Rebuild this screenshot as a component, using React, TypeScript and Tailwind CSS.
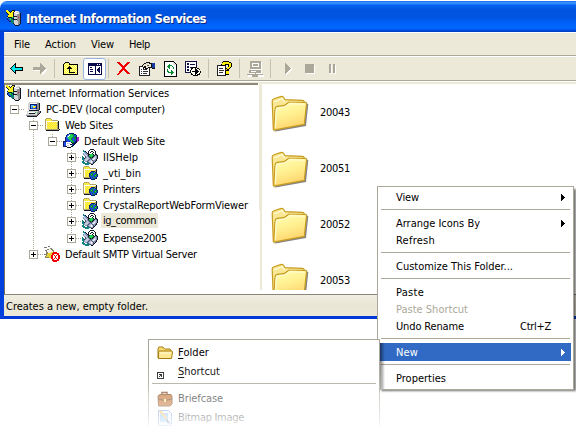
import React, { useLayoutEffect, useRef } from "react";

/** Label whose letter spacing is adjusted so that it takes exactly `w` pixels. */
function Label({ w, className = "", children }: { w: number; className?: string; children: React.ReactNode }) {
  const ref = useRef<HTMLSpanElement>(null);
  useLayoutEffect(() => {
    const el = ref.current;
    if (!el) return;
    el.style.letterSpacing = "0px";
    const natural = el.getBoundingClientRect().width;
    const count = (el.textContent || "").length;
    if (count > 0) el.style.letterSpacing = `${(w - natural) / count}px`;
  }, [w]);
  return (
    <span ref={ref} className={`inline-block whitespace-pre ${className}`}>
      {children}
    </span>
  );
}

function Icon({ w = 16, h = 16, className = "", children }: { w?: number; h?: number; className?: string; children: React.ReactNode }) {
  return (
    <svg width={w} height={h} viewBox={`0 0 ${w} ${h}`} shapeRendering="crispEdges" className={`block shrink-0 ${className}`}>
      {children}
    </svg>
  );
}

const palette: Record<string, string> = {
  k: "#101828",
  n: "#0a1c78",
  b: "#1c4ce0",
  c: "#50b8e8",
  g: "#0a8a30",
  G: "#20d050",
  y: "#fff21c",
  Y: "#f4e460",
  o: "#b0a468",
  w: "#ffffff",
  l: "#c4cae0",
  m: "#8e98b8",
  d: "#4c5670",
  t: "#108080",
  s: "#d4d4d4",
  S: "#8c8c8c",
  r: "#f02020",
  p: "#a020c0",
};

/** Small icon drawn from rows of palette letters; a dot is transparent. */
function Pixels({ rows }: { rows: string[] }) {
  return (
    <Icon>
      {rows.flatMap((row, y) =>
        row.split("").map((ch, x) => (palette[ch] ? <rect key={`${x}-${y}`} x={x} y={y} width="1" height="1" fill={palette[ch]} /> : null)),
      )}
    </Icon>
  );
}

/* ---------- window and tree icons ---------- */

const ServerIcon = () => (
  <Pixels
    rows={[
      "yy....kkk.......",
      "yyyk.kyykwwss...",
      "kyyykyykwwsssS..",
      ".kyyyyyksswwwSk.",
      "..kyyyyksssSSSk.",
      "..yyyyyksssSSSk.",
      ".kyyyyykkkkSSSk.",
      ".ckkkkGgsssSrSk.",
      ".nbGGgnksssSSSk.",
      ".nbbGgtkkkkSSSk.",
      "..nbbgttsssSSSk.",
      "...nngttssssSSk.",
      ".....tttssssSSk.",
      "......tkssssSSk.",
      "........ksssSk..",
      ".........kkkk...",
    ]}
  />
);

const ComputerIcon = () => (
  <Pixels
    rows={[
      "................",
      "....ssssssssss..",
      "...sswwwwwwwSSk.",
      "...ssnnnnnnnSSk.",
      "...ssncccbbnSSk.",
      "...ssnccyyynSSk.",
      "...ssncbyybnSSk.",
      "...ssnbbbbbnSSk.",
      "...ssssssssSSSk.",
      "....kkkkkkkkkk..",
      "..sssssssssssSSk",
      "..swwwwwwwGsSSSk",
      "..sskkkkkkssSSk.",
      ".sssssssssssSk..",
      ".SSSSSSSSSSSk...",
      "..kkkkkkkkkk....",
    ]}
  />
);

const FolderIcon = () => (
  <Pixels
    rows={[
      "................",
      "..ooooo.........",
      ".oyYyYyo........",
      ".oYyYyYyoooooo..",
      ".owwwwwwwwwwwwk.",
      ".owyYyYyYyYyYok.",
      ".owYyYyYyYyYyok.",
      ".owyYyYyYyYyYok.",
      ".owYyYyYyYyYyok.",
      ".owyYyYyYyYyYok.",
      ".owYyYyYyYyYyok.",
      ".owyYyYyYyYyYok.",
      ".ooooooooooooook",
      "..kkkkkkkkkkkkk.",
      "................",
      "................",
    ]}
  />
);

const WebFolderIcon = () => (
  <Pixels
    rows={[
      "................",
      "..ooooo.........",
      ".oyYyYyo........",
      ".oYyYyYyoooooo..",
      ".owwwwwwwwwwwwk.",
      ".owyYyYyYyYyYok.",
      ".owYyYyYYnnnnok.",
      ".owyYyYynbbgGnk.",
      ".owYyYynbggbbbn.",
      ".owyYyYngGgbbggn",
      ".owYyYynbggbgGgn",
      ".owyYyYnbbbbggbn",
      ".ooooooonbgbbbn.",
      "..kkkkkknbbggnk.",
      ".........nnnn...",
      "................",
    ]}
  />
);

const WebSiteIcon = () => (
  <Pixels
    rows={[
      "......nnnnn.....",
      "....nncGGggnn...",
      "...nbcwGGGgbbn..",
      "...ncwGGGGgbgn..",
      "..nbcGGGGgbggnpp",
      "..nbbGGGgbbggnpp",
      "..nbbbGGgbbbgnpp",
      "..nbbbbGGgbbbnpp",
      "nnnnbbbbGGgbnkp.",
      "nbbwwwwwkggnnk..",
      "nbbwlllwwkknk...",
      "nbbwwwwkkbnk....",
      "nbbwllwwwnk.....",
      "nnnkwwwwkk......",
      "....kkkk........",
      "................",
    ]}
  />
);

const AppIcon = () => (
  <Pixels
    rows={[
      "........kkkk....",
      ".t.....kwwwwk...",
      ".ttk..kwwkkwwk..",
      "..cmk.kwkwwkwk..",
      ".clmmkkwwwkwwk..",
      ".mllmmkkGGGkwkk.",
      "..mllmkGGGGgkmdk",
      "t..dlmdgGGgkmlmk",
      "tt.dmlmdkgkmllmk",
      "ttkmlllmddmlwlmk",
      "ttmlllmdmdlwlmk.",
      ".tmllmdmlldmmdk.",
      "tt.mmdmllwldmk..",
      "ttt..tdmlwldk...",
      ".tttttttdmmk....",
      "...tttt..kk.....",
    ]}
  />
);

const SmtpIcon = () => (
  <Icon>
    <path d="M0 1h3v1H0zM4 0h2v1H4zM1 4h2v1H1zM3 6h2v1H3zM0 8h2v1H0z" fill="#777" />
    <path d="M3 3l5-1 4 6-6 4H1z" fill="#8a8468" />
    <path d="M3 4l4-1 2 3-5 1z" fill="#f4f4e8" />
    <path d="M4 7l6-1 1 3-4 3-5-1z" fill="#e8d030" />
    <path d="M9 6h4v1h2v2h1v4h-1v2h-2v1H9v-1H8v-2H7V9h1V7h1z" fill="#f00000" />
    <path d="M9 8h5v6H9z" fill="#fff" />
    <path d="M9 8h1v1h1v1h1V9h1V8h1v1h-1v1h-1v2h1v1h1v1h-1v-1h-1v-1h-1v1h-1v1H9v-1h1v-1h1v-2h-1V9H9z" fill="#f00000" />
  </Icon>
);

/* ---------- toolbar icons ---------- */

const BackIcon = () => (
  <Icon w={13} h={12}>
    <path d="M6 0v4h7v4H6v3H5v-1H4V9H3V8H2V7H1V6H0V5h1V4h1V3h1V2h1V1h1V0z" fill="#000" />
    <path d="M5 2v3h7v2H5v2H4V8H3V7H2V6H1V5h1V4h1V3h1V2z" fill="#00e8f0" />
  </Icon>
);
const ForwardIcon = () => (
  <Icon w={14} h={12}>
    <path d="M8 1v3H1v4h8v4l5-5V6z" fill="#fff" />
    <path d="M7 0v4H0v3h7v4h1v-1h1V9h1V8h1V7h1V6h1V5h-1V4h-1V3h-1V2H9V1H8V0z" fill="#aca899" />
  </Icon>
);
const UpIcon = () => (
  <Icon w={16} h={14}>
    <defs>
      <pattern id="dither" width="2" height="2" patternUnits="userSpaceOnUse">
        <rect width="2" height="2" fill="#ffff30" />
        <path d="M0 0h1v1H0zM1 1h1v1H1z" fill="#fff6a8" />
      </pattern>
    </defs>
    <path d="M2 0h4v1h1v1h8v11H0V2h1V1h1z" fill="#000" />
    <path d="M2 1h4v2h8v9H1V2h1z" fill="url(#dither)" />
    <path d="M6 4h1v1h1v1h1v1H7v3h5v1H6V7H4V6h1V5h1z" fill="#000" />
  </Icon>
);
const PanesIcon = () => (
  <Icon w={14} h={12}>
    <path d="M0 0h14v12H0z" fill="#08084c" />
    <path d="M1 3h6v8H1zM8 3h5v8H8z" fill="#fff" />
    <path d="M2 4h2v1H2zM2 6h3v1H2zM2 8h3v1H2zM11 4h1v6h-1V9h-1V8H9V6h1V5h1z" fill="#08084c" />
    <path d="M9 1h1v1H9zM11 1h1v1h-1z" fill="#fff" />
  </Icon>
);
const DeleteIcon = () => (
  <Icon w={14} h={13}>
    <path d="M0 0h2l4 4 5-4h2L8 6l5 6h-2L6 8l-4 5H0l5-7z" fill="#f00000" />
  </Icon>
);
const PropertiesIcon = () => (
  <Icon w={16} h={14}>
    <path d="M0 4h11v10H0z" fill="#222" />
    <path d="M1 5h9v8H1z" fill="#fff" />
    <path d="M2 7h1v1H2zM4 7h4v1H4zM2 9h1v1H2zM4 9h5v1H4zM2 11h1v1H2zM4 11h4v1H4z" fill="#333" />
    <path d="M3 4V3h1V2h1V1h2V0h4v1h5v6h-3V6H9v1H8v1H6V6H5v1H4V5z" fill="#111" />
    <path d="M4 3h1V2h2V1h3v1h2v3H9v1H7V4H5v1H4z" fill="#e8e4d0" />
    <path d="M13 1h3v5h-3z" fill="#1838a0" />
    <path d="M8 3h2v1H8z" fill="#555" />
  </Icon>
);
const RefreshIcon = () => (
  <Icon w={13} h={16}>
    <path d="M0 0h10v1h1v1h1v1h1v13H0z" fill="#000" />
    <path d="M1 1h8v3h3v11H1z" fill="#fff" />
    <path d="M9 1v3h3V3h-1V2h-1V1z" fill="#ddd" />
    <path d="M5 3v2h3v1h1v2h1V6H9V5H8V4H6V3zM4 4h1v1H4zM3 5h3v1H3zM4 6h2v1H4zM5 7h1v1H5zM3 8h1v2h1v1h3v1H4v-1H3zM7 9h1v5H7zM8 10h1v3H8zM9 11h1v1H9z" fill="#078a30" />
  </Icon>
);
const ExportIcon = () => (
  <Icon w={16} h={15}>
    <path d="M0 0h12v12H0z" fill="#101044" />
    <path d="M1 1h10v10H1z" fill="#fff" />
    <path d="M2 2h2v2H2zM5 3h5v1H5zM2 5h2v2H2zM5 6h5v1H5zM2 8h2v2H2z" fill="#101044" />
    <path d="M8 6h4v1h2v1h1v2h1v2h-1v2h-2v1H8v-1H6v-2H5V9h1V7h2z" fill="#000" />
    <path d="M8 7h4v1h2v1h1v3h-1v1h-2v1H8v-1H7v-1H6V9h1V8h1z" fill="#fffceb" />
    <path d="M10 7h1v1h1v1h1v1h1v1h-1v1h-1v1h-1v1h-1v-3H7v-1h3z" fill="#000" />
  </Icon>
);
const HelpIcon = () => (
  <Icon w={15} h={15}>
    <path d="M0 4h9v11H0z" fill="#222" />
    <path d="M1 5h7v9H1z" fill="#fff" />
    <path d="M2 7h4v1H2zM2 9h5v1H2zM2 11h4v1H2z" fill="#333" />
    <path d="M6 0h6v1h2v1h1v4h-1v1h-1v1h-1v6H8v-4h1V7h2V4H9v1H4V3h1V1h1z" fill="#000" />
    <path d="M6 1h6v1h2v4h-1v1h-1v1h-2v1H9V8h1V6h2V3H8v1H5V2h1zM9 10h3v3H9z" fill="#ffee00" />
  </Icon>
);
const NetworkIcon = () => (
  <Icon w={17} h={16}>
    <path d="M4 1h11v9H4zM3 10h12v4H3zM1 14h16v2H1z" fill="#fff" />
    <path d="M3 0h11v8H3zM2 9h12v3H2zM8 12h1v2H8zM0 13h16v1H0zM5 14h6v2H5z" fill="#aca899" />
    <path d="M5 2h7v4H5zM4 10h5v1H4z" fill="#fff" />
    <path d="M6 3h5v2H6z" fill="#aca899" />
  </Icon>
);
const PlayIcon = () => (
  <Icon w={8} h={12}>
    <path d="M1 1l7 5-7 6z" fill="#fff" />
    <path d="M0 0h1v1h1v1h1v1h1v1h1v1h1v1H5v1H4v1H3v1H2v1H1v1H0z" fill="#aca899" />
  </Icon>
);
const StopIcon = () => (
  <Icon w={10} h={10}>
    <path d="M1 1h9v9H1z" fill="#fff" />
    <path d="M0 0h9v9H0z" fill="#aca899" />
  </Icon>
);
const PauseIcon = () => (
  <Icon w={8} h={10}>
    <path d="M1 1h2v9H1zM5 1h2v9H5z" fill="#fff" />
    <path d="M0 0h2v9H0zM4 0h2v9H4z" fill="#aca899" />
  </Icon>
);

const Divider = ({ className }: { className: string }) => <div className={`h-[19px] w-px shrink-0 bg-[#c5c2b0] ${className}`} />;

function Toolbar() {
  return (
    <div className="flex h-[23px] items-center pl-[6px]">
      <BackIcon />
      <div className="w-[10px]" />
      <ForwardIcon />
      <Divider className="ml-[7px] mr-2" />
      <UpIcon />
      <div className="ml-1 flex h-[22px] w-[23px] items-center justify-center rounded-[3px] border border-[#98b5e2] bg-white">
        <PanesIcon />
      </div>
      <Divider className="ml-[2px] mr-[8px]" />
      <DeleteIcon />
      <div className="w-[8px]" />
      <PropertiesIcon />
      <div className="w-[9px]" />
      <RefreshIcon />
      <div className="w-[8px]" />
      <ExportIcon />
      <Divider className="ml-[7px] mr-[8px]" />
      <HelpIcon />
      <Divider className="ml-[7px] mr-[7px]" />
      <NetworkIcon />
      <Divider className="ml-[6px] mr-[14px]" />
      <PlayIcon />
      <div className="w-[12px]" />
      <StopIcon />
      <div className="w-[14px]" />
      <PauseIcon />
    </div>
  );
}

/* ---------- console tree ---------- */

type Node = { text: string; w: number; pad: string; icon: React.FC; sign?: "+" | "-"; selected?: boolean };

const nodes: Node[] = [
  { text: "Internet Information Services", w: 142, pad: "pl-0", icon: ServerIcon },
  { text: "PC-DEV (local computer)", w: 119, pad: "pl-[4px]", icon: ComputerIcon, sign: "-" },
  { text: "Web Sites", w: 48, pad: "pl-[23px]", icon: FolderIcon, sign: "-" },
  { text: "Default Web Site", w: 81, pad: "pl-[42px]", icon: WebSiteIcon, sign: "-" },
  { text: "IISHelp", w: 35, pad: "pl-[61px]", icon: AppIcon, sign: "+" },
  { text: "_vti_bin", w: 38, pad: "pl-[61px]", icon: WebFolderIcon, sign: "+" },
  { text: "Printers", w: 37, pad: "pl-[61px]", icon: WebFolderIcon, sign: "+" },
  { text: "CrystalReportWebFormViewer", w: 145, pad: "pl-[61px]", icon: WebFolderIcon, sign: "+" },
  { text: "ig_common", w: 53, pad: "pl-[61px]", icon: AppIcon, sign: "+", selected: true },
  { text: "Expense2005", w: 64, pad: "mt-px pl-[61px]", icon: AppIcon, sign: "+" },
  { text: "Default SMTP Virtual Server", w: 132, pad: "pl-[23px]", icon: SmtpIcon, sign: "+" },
];

function Tree() {
  return (
    <div className="relative">
      <svg width="100" height="176" className="absolute left-0 top-0" shapeRendering="crispEdges">
        <path d="M27.5 33v132M46.5 49v4M65.5 65v84" stroke="#aca899" strokeDasharray="1 1" />
      </svg>
      {nodes.map(({ text, w, pad, icon: NodeIcon, sign, selected }) => (
        <div key={text} className={`relative flex h-4 items-start ${pad}`}>
          {sign && (
            <svg width="15" height="16" shapeRendering="crispEdges" className="block shrink-0">
              <path d="M9 8.500h6" stroke="#aca899" strokeDasharray="1 1" />
              <path d="M.5 4.500h8v8h-8z" fill="#fff" stroke="#aca899" />
              <path d={sign === "+" ? "M2 8h5v1H2zM4 6h1v5H4z" : "M2 8h5v1H2z"} fill="#000" />
            </svg>
          )}
          <NodeIcon />
          <div className={`ml-[3px] flex items-center px-[2px] ${selected ? "h-[15px] bg-[#ece9d8]" : "h-[18px]"}`}>
            <Label w={w}>{text}</Label>
          </div>
        </div>
      ))}
    </div>
  );
}

/* ---------- folder list ---------- */

const BigFolder = () => (
  <svg width="38" height="38" viewBox="0 0 38 38" className="mt-[2px] block shrink-0">
    <defs>
      <linearGradient id="front" x1="0" y1="0" x2=".35" y2="1">
        <stop offset="0" stopColor="#fffdb4" />
        <stop offset=".5" stopColor="#fff294" />
        <stop offset="1" stopColor="#ffd46c" />
      </linearGradient>
      <filter id="soft" x="-20%" y="-20%" width="140%" height="140%">
        <feGaussianBlur stdDeviation=".7" />
      </filter>
    </defs>
    <path d="M3 36.800L35 31 37.300 9 34 8z" fill="#444" opacity=".65" filter="url(#soft)" />
    <path d="M2.300 34L1.200 6.500Q1 4.500 3 3.800L9.500 1.600q2-.6 3 .7L14 4.600l17.500.8q1.800.1 1.800 2V12z" fill="#f8e894" stroke="#c99c20" strokeWidth="1.200" />
    <path d="M3 7l8.500-3.500 2 3.500" fill="none" stroke="#fffbd4" strokeWidth="1.300" />
    <path d="M2.600 35.200L4 14q.2-2.300 2.200-2.600l6.300-.8q1-.1 2-.9l2.500-2q1-.8 2.300-.7l15.200.4q1.200.1 1 1.500L33.300 29.300z" fill="url(#front)" stroke="#c99c20" strokeWidth="1.200" strokeLinejoin="round" />
    <path d="M4.500 32.500L5.300 13.600l8.200-1.400L18 8.800l16 .4" fill="none" stroke="#fffde0" />
  </svg>
);

const folders = ["20043", "20051", "20052", "20053"];

/* ---------- menus ---------- */

const MenuLine = () => <div className="mx-[1px] mb-[5px] mt-[3px] h-px bg-[#aca899]" />;

function MenuItem({ text, w, arrow, hint, active, disabled }: { text: string; w: number; arrow?: boolean; hint?: string; active?: boolean; disabled?: boolean }) {
  return (
    <div
      className={`flex h-[17px] items-center pl-4 pr-[9px] ${
        active ? "shadow-[0_-1px_0_#316ac5] bg-[#316ac5] text-white" : disabled ? "text-[#aca899]" : ""
      }`}
    >
      <Label w={w}>{text}</Label>
      <div className="grow" />
      {hint && <Label w={31} className="mr-[11px]">{hint}</Label>}
      {arrow && (
        <svg width="4" height="7" shapeRendering="crispEdges" className="-mr-[3px]">
          <path d="M0 0h1v1h1v1h1v1h1v1H3v1H2v1H1v1H0z" fill="currentColor" />
        </svg>
      )}
    </div>
  );
}

function ContextMenu() {
  return (
    <div className="absolute left-[377px] top-[186px] h-[204px] w-[197px] border border-[#aca899] bg-white px-[2px] py-[2px] shadow-[3px_2px_2px_-1px_rgba(0,0,0,0.55)]">
      <MenuItem text="View" w={23} arrow />
      <MenuLine />
      <MenuItem text="Arrange Icons By" w={84} arrow />
      <MenuItem text="Refresh" w={39} />
      <MenuLine />
      <MenuItem text="Customize This Folder..." w={117} />
      <MenuLine />
      <MenuItem text="Paste" w={28} />
      <MenuItem text="Paste Shortcut" w={72} disabled />
      <MenuItem text="Undo Rename" w={68} hint="Ctrl+Z" />
      <MenuLine />
      <MenuItem text="New" w={22} arrow active />
      <MenuLine />
      <MenuItem text="Properties" w={50} />
    </div>
  );
}

const SmallFolder = () => (
  <svg width="16" height="16" viewBox="0 0 16 16" className="block">
    <path d="M1 13V4l1-2h4l1.500 2H13l1 1.500V13z" fill="#f8dc70" stroke="#a87c10" />
    <path d="M1.500 13.500V7q0-1 1-1h12q1 0 1 1l-1 6.500z" fill="#ffe994" stroke="#a87c10" />
    <path d="M3 8h11" stroke="#fffbd8" />
  </svg>
);
const ShortcutIcon = () => (
  <Icon>
    <path d="M0 8h7v7H0z" fill="#222" />
    <path d="M1 9h5v5H1z" fill="#fff" />
    <path d="M2 10h3v3H4v-1H3v1H2v-1h1v-1H2z" fill="#222" />
  </Icon>
);
const BriefcaseIcon = () => (
  <svg width="16" height="16" viewBox="0 0 16 16" className="block">
    <path d="M5 4V1.500h5V4" fill="none" stroke="#713000" strokeWidth="1.500" />
    <path d="M1 5l2-1.500h11l1 2V13l-2 2H1.500z" fill="#b85b12" stroke="#713000" />
    <path d="M1 8q7 3 14 0" fill="none" stroke="#5c2400" />
    <path d="M7 8h2v3H7z" fill="#ffe27a" />
  </svg>
);
const BitmapIcon = () => (
  <svg width="16" height="16" viewBox="0 0 16 16" className="block">
    <path d="M1.500.5h10l3 3v12h-13z" fill="#e9f2ff" stroke="#5584d0" />
    <path d="M3 3h8v9H3z" fill="#71b0f4" />
    <path d="M3 1l7 8" stroke="#f2b42c" strokeWidth="2" />
    <path d="M9 8l5 6-4-1z" fill="#223a80" />
  </svg>
);

const NewItem = ({ icon: ItemIcon, w, children }: { icon: React.FC; w: number; children: React.ReactNode }) => (
  <div className="flex h-[19px] items-center pl-2">
    <ItemIcon />
    <Label w={w} className="ml-[5px]">{children}</Label>
  </div>
);

function NewMenu() {
  return (
    <>
      <div className="absolute left-[380px] top-[343px] h-[46px] w-[5px] bg-linear-to-r from-black/50 to-transparent" />
      <div className="absolute left-[148px] top-[339px] h-[89px] w-[232px] border-x border-t border-[#aca899] bg-white pt-[3px]">
        <NewItem icon={SmallFolder} w={31}>
          <span className="underline underline-offset-2">F</span>older
        </NewItem>
        <NewItem icon={ShortcutIcon} w={42}>
          <span className="underline underline-offset-2">S</span>hortcut
        </NewItem>
        <div className="mx-[3px] mb-[5px] mt-[2px] h-px bg-[#aca899]" />
        <NewItem icon={BriefcaseIcon} w={45}>Briefcase</NewItem>
        <NewItem icon={BitmapIcon} w={66}>Bitmap Image</NewItem>
      </div>
      <div className="absolute left-[140px] top-[360px] h-[68px] w-[242px] bg-[linear-gradient(to_bottom,rgba(255,255,255,0)_0px,rgba(255,255,255,0.25)_31px,rgba(255,255,255,0.42)_32px,rgba(255,255,255,0.74)_58px,rgba(255,255,255,0.95)_68px)]" />
    </>
  );
}

export default function App() {
  return (
    <div className="relative h-[428px] w-[576px] overflow-hidden bg-white font-['DejaVu_Sans_Condensed','DejaVu_Sans',sans-serif] text-[11px] leading-[16px] text-black [font-stretch:condensed]">
      <div className="flex h-[319px] flex-col pt-px">
        <div className="flex h-[31px] shrink-0 items-center rounded-tl-[7px] bg-[linear-gradient(to_bottom,#0050e0_0px,#3d95ff_1px,#2a86fb_3px,#0764ef_4px,#0054df_9px,#0054e0_16px,#0062fb_23px,#0067ff_27px,#0054e8_29px,#0038b8_31px)] pl-[6px] pt-[3px]">
          <ServerIcon />
          <Label w={180} className="ml-1 pt-[2px] text-[13px] font-bold text-white [text-shadow:1px_1px_0_#0a2a80]">
            Internet Information Services
          </Label>
        </div>

        <div className="flex grow flex-col border-b-[3px] border-l-[4px] border-b-[#0038d8] border-l-[#0040dc] bg-[#ece9d8] shadow-[inset_1px_0_0_#d8e0e4]">
          <div className="flex h-6 shrink-0 items-center border-b border-t border-b-[#aca899] border-t-white pl-[10px] pt-[2px]">
            <Label w={16}>File</Label>
            <Label w={31} className="ml-[15px]">Action</Label>
            <Label w={23} className="ml-[15px]">View</Label>
            <Label w={21} className="ml-[15px]">Help</Label>
          </div>
          <div className="h-[25px] shrink-0 border-b border-t border-b-[#aca899] border-t-white">
            <Toolbar />
          </div>
          <div className="h-[2px] shrink-0 border-t border-white" />

          <div className="flex h-[211px] shrink-0 bg-white">
            <div className="w-[254px] shrink-0 border-l border-t-2 border-l-[#716f64] border-t-[#8b887a] pl-px">
              <Tree />
            </div>
            <div className="flex w-[4px] shrink-0 flex-col items-end">
              <div className="h-[127px] w-[3px] bg-[#ece9d8]" />
              <div className="h-[80px] w-[2px] bg-[#ece9d8]" />
            </div>
            <div className="h-[207px] grow overflow-hidden border-t border-[#ece9d8] pl-[9px] pt-px">
              {folders.map((name) => (
                <div key={name} className="flex h-14 items-center">
                  <BigFolder />
                  <Label w={30} className="ml-[11px]">{name}</Label>
                </div>
              ))}
            </div>
          </div>

          <div className="flex grow items-center border-t border-[#8b887a] bg-linear-to-b from-[#f0eee2] via-[#e9e6d6] to-[#ece9d8] pl-[2px] pt-[3px]">
            <Label w={142}>Creates a new, empty folder.</Label>
          </div>
        </div>
      </div>

      <ContextMenu />
      <NewMenu />
    </div>
  );
}
